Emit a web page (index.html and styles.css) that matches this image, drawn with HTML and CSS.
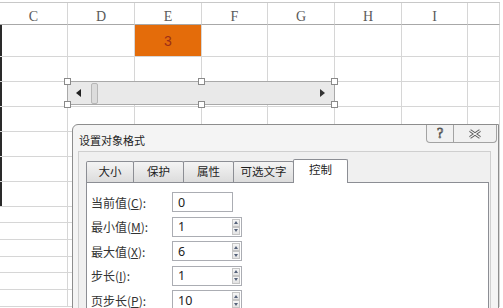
FILE: index.html
```html
<!DOCTYPE html>
<html lang="zh-CN">
<head>
  <meta charset="UTF-8">
  <title>设置对象格式</title>
  <link rel="stylesheet" href="styles.css">
</head>
<body>
<div class="screen">

  <!-- 工作表 -->
  <div class="sheet">
    <div class="hd">C</div><div class="hd">D</div><div class="hd">E</div><div class="hd">F</div><div class="hd">G</div><div class="hd">H</div><div class="hd">I</div><div class="hd"></div>
    <div class="sel"></div><div></div><div class="orange">3</div><div></div><div></div><div></div><div></div><div></div>
    <div class="sel"></div><div></div><div></div><div></div><div></div><div></div><div></div><div></div>
    <div class="sel"></div><div></div><div></div><div></div><div></div><div></div><div></div><div></div>
    <div class="sel"></div><div></div><div></div><div></div><div></div><div></div><div></div><div></div>
    <div class="sel"></div><div></div><div></div><div></div><div></div><div></div><div></div><div></div>
    <div class="sel"></div><div></div><div></div><div></div><div></div><div></div><div></div><div></div>
    <div class="sel"></div><div></div><div></div><div></div><div></div><div></div><div></div><div></div>
    <div></div><div></div><div></div><div></div><div></div><div></div><div></div><div></div>
    <div></div><div></div><div></div><div></div><div></div><div></div><div></div><div></div>
    <div></div><div></div><div></div><div></div><div></div><div></div><div></div><div></div>
    <div></div><div></div><div></div><div></div><div></div><div></div><div></div><div></div>
    <div></div><div></div><div></div><div></div><div></div><div></div><div></div><div></div>
    <div></div><div></div><div></div><div></div><div></div><div></div><div></div><div></div>
  </div>

  <!-- 滚动条控件 -->
  <div class="scrollctl">
    <span class="sc-btn"><i class="tri-left"></i></span>
    <span class="thumb"></span>
    <span class="track"></span>
    <span class="sc-btn"><i class="tri-right"></i></span>
    <span class="handle h-tl"></span>
    <span class="handle h-tm"></span>
    <span class="handle h-tr"></span>
    <span class="handle h-bl"></span>
    <span class="handle h-bm"></span>
    <span class="handle h-br"></span>
  </div>

  <!-- 对话框 -->
  <div class="dialog">
    <div class="titlebar">
      <span class="title">设置对象格式</span>
      <div class="capbtns">
        <span class="capbtn help">?</span>
        <span class="capbtn close">
          <svg width="14" height="10" viewBox="0 0 14 10">
            <path d="M2 1.5 L12 8.5 M12 1.5 L2 8.5" stroke="#555" stroke-width="3" fill="none"/>
            <path d="M2 1.5 L12 8.5 M12 1.5 L2 8.5" stroke="#f4f4f4" stroke-width="1.3" fill="none"/>
          </svg>
        </span>
      </div>
    </div>

    <div class="group">
      <div class="tabs">
        <span class="tab t-size">大小</span>
        <span class="tab t-prot">保护</span>
        <span class="tab t-attr">属性</span>
        <span class="tab t-alt">可选文字</span>
        <span class="tab t-ctrl active">控制</span>
      </div>
      <div class="panel">
        <div class="form">
          <label>当前值(<u>C</u>):</label>
          <div class="field plain"><span class="val">0</span></div>

          <label>最小值(<u>M</u>):</label>
          <div class="field spin"><span class="val">1</span><span class="spinner"><span class="up"></span><span class="down"></span></span></div>

          <label>最大值(<u>X</u>):</label>
          <div class="field spin"><span class="val">6</span><span class="spinner"><span class="up"></span><span class="down"></span></span></div>

          <label>步长(<u>I</u>):</label>
          <div class="field spin"><span class="val">1</span><span class="spinner"><span class="up"></span><span class="down"></span></span></div>

          <label>页步长(<u>P</u>):</label>
          <div class="field spin"><span class="val">10</span><span class="spinner"><span class="up"></span><span class="down"></span></span></div>
        </div>
      </div>
    </div>
  </div>

</div>
</body>
</html>
```

FILE: styles.css
```css
* {
  box-sizing: border-box;
}

body {
  margin: 0;
  background: #fff;
  color: #222;
  font-family: "Noto Sans CJK SC", sans-serif;
  overflow: hidden;
}

.screen {
  position: relative;
  width: 503px;
  height: 308px;
  overflow: hidden;
}

/* 工作表网格 */
.sheet {
  display: grid;
  grid-template-columns: 68px 67px 67px 66px 67px 67px 66px 32px;
  grid-template-rows: 22px 32px repeat(6, 25px) 16px 17px 17px 16px 17px 17px;
  width: 500px;
  margin-top: 2px;
  border-top: 1px solid #c8c8c8;
}

.sheet > div {
  border-right: 1px solid #d6d6d6;
  border-bottom: 1px solid #d6d6d6;
}

.sheet > .hd {
  border-bottom-color: #a8a8a8;
  font-family: "Liberation Serif", serif;
  font-size: 14px;
  line-height: 14px;
  padding-top: 7px;
  color: #5a5a5a;
  text-align: center;
}

.sheet > .sel {
  box-shadow: inset 2px 0 #2a2a2a;
}

.sheet > .orange {
  background: #e46c0a;
  color: #9e2f17;
  font-family: "Liberation Sans", sans-serif;
  font-size: 14px;
  display: flex;
  align-items: center;
  justify-content: center;
}

/* 滚动条控件 */
.scrollctl {
  position: absolute;
  left: 67px;
  top: 81px;
  width: 268px;
  height: 24px;
  border: 1px solid #a9a9a9;
  background: #e9e9e9;
  display: flex;
  align-items: center;
}

.sc-btn {
  width: 23px;
  height: 100%;
  display: flex;
  align-items: center;
  justify-content: center;
}

.tri-left {
  border-right: 5px solid #222;
  border-top: 4px solid transparent;
  border-bottom: 4px solid transparent;
  margin-left: -3px;
}

.tri-right {
  border-left: 5px solid #333;
  border-top: 4px solid transparent;
  border-bottom: 4px solid transparent;
}

.thumb {
  width: 7px;
  height: 21px;
  border: 1px solid #b7b7b7;
  background: #dcdcdc;
  border-radius: 2px;
}

.track {
  flex: 1;
}

.handle {
  position: absolute;
  width: 7px;
  height: 7px;
  border: 1px solid #8a8a8a;
  background: #fff;
}

.h-tl { left: -4px; top: -4px; }
.h-tm { left: 130px; top: -4px; }
.h-tr { left: 263px; top: -4px; }
.h-bl { left: -4px; top: 19px; }
.h-bm { left: 130px; top: 19px; }
.h-br { left: 263px; top: 19px; }

/* 对话框 */
.dialog {
  position: absolute;
  left: 72px;
  top: 124px;
  width: 427px;
  height: 200px;
  border: 1px solid #8d8d8d;
  border-top-left-radius: 6px;
  background: #f4f4f4;
}

.titlebar {
  height: 26px;
  display: flex;
  justify-content: space-between;
  align-items: flex-start;
}

.title {
  font-size: 11px;
  line-height: 14px;
  padding: 8px 0 0 6px;
  color: #1e1e1e;
}

.capbtns {
  display: flex;
  height: 18px;
  margin-right: 1px;
  border: 1px solid #a3a3a3;
  border-top: none;
  border-radius: 0 0 4px 4px;
  background: #f1f1f1;
}

.capbtn {
  display: flex;
  align-items: center;
  justify-content: center;
}

.help {
  width: 27px;
  border-right: 1px solid #a3a3a3;
  font-family: "Liberation Serif", serif;
  font-size: 14px;
  color: #f4f4f4;
  -webkit-text-stroke: 0.8px #555;
}

.close {
  width: 42px;
}

.group {
  height: 200px;
  margin: 0 7px 0 5px;
  padding: 7px 1px 0 7px;
  border: 1px solid #cfcfcf;
  background: #f0f0f0;
}

.tabs {
  display: flex;
  align-items: flex-end;
  height: 23px;
}

.tab {
  height: 21px;
  margin-left: -1px;
  border: 1px solid #8c8e94;
  border-bottom: none;
  border-radius: 2px 2px 0 0;
  background: linear-gradient(#f4f4f4, #dcdcdc);
  font-size: 11.5px;
  line-height: 19px;
  text-align: center;
  color: #1e1e1e;
}

.tab:first-child {
  margin-left: 0;
}

.t-size { width: 48px; }
.t-prot { width: 51px; }
.t-attr { width: 51px; }
.t-alt { width: 61px; }
.t-ctrl { width: 55px; }

.tab.active {
  position: relative;
  height: 24px;
  margin-bottom: -1px;
  background: #fff;
}

.panel {
  height: 160px;
  padding: 9px 0 0 4px;
  border: 1px solid #8c8e94;
  background: #fff;
}

.form {
  display: grid;
  grid-template-columns: 81px auto;
  grid-auto-rows: 20px;
  row-gap: 4.5px;
  align-items: center;
  justify-items: start;
}

.form label {
  font-size: 12px;
  color: #333;
}

.field {
  height: 20px;
  border: 1px solid #abadb3;
  display: flex;
  align-items: center;
  font-family: "Noto Sans", sans-serif;
  font-size: 12.5px;
  color: #222;
}

.field .val {
  flex: 1;
  padding-left: 5px;
}

.field.plain {
  width: 61px;
}

.field.spin {
  width: 70px;
}

.spinner {
  width: 9px;
  height: 100%;
  display: flex;
  flex-direction: column;
  padding: 1px 1px 1px 0;
}

.spinner span {
  flex: 1;
  border: 1px solid #c5c5c5;
  background: linear-gradient(#f6f6f6, #e3e3e3);
  display: flex;
  align-items: center;
  justify-content: center;
}

.spinner .up::after {
  content: "";
  border-bottom: 3px solid #56627a;
  border-left: 2.5px solid transparent;
  border-right: 2.5px solid transparent;
}

.spinner .down::after {
  content: "";
  border-top: 3px solid #56627a;
  border-left: 2.5px solid transparent;
  border-right: 2.5px solid transparent;
}
```
